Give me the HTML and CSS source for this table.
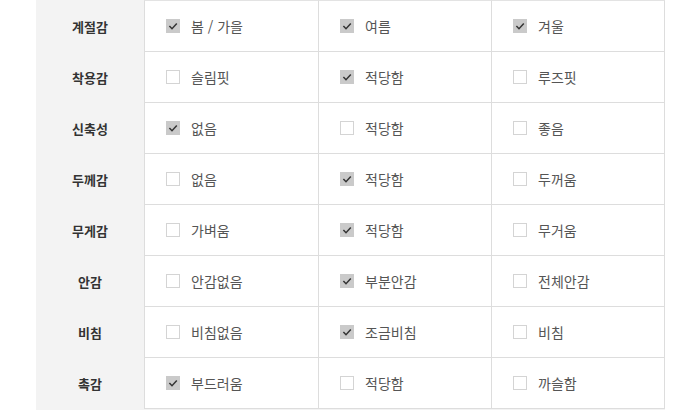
FILE: index.html
```html
<!DOCTYPE html>
<html lang="ko">
<head>
<meta charset="utf-8">
<link rel="stylesheet" href="styles.css">
</head>
<body>
<div class="sheet">
  <div class="row">
    <div class="label">계절감</div>
    <div class="opt"><span class="box on"><svg viewBox="0 0 14 14"><path d="M3.4 7 L6 9.7 L10.8 4.6"/></svg></span>봄 / 가을</div>
    <div class="opt"><span class="box on"><svg viewBox="0 0 14 14"><path d="M3.4 7 L6 9.7 L10.8 4.6"/></svg></span>여름</div>
    <div class="opt"><span class="box on"><svg viewBox="0 0 14 14"><path d="M3.4 7 L6 9.7 L10.8 4.6"/></svg></span>겨울</div>
  </div>
  <div class="row">
    <div class="label">착용감</div>
    <div class="opt"><span class="box"></span>슬림핏</div>
    <div class="opt"><span class="box on"><svg viewBox="0 0 14 14"><path d="M3.4 7 L6 9.7 L10.8 4.6"/></svg></span>적당함</div>
    <div class="opt"><span class="box"></span>루즈핏</div>
  </div>
  <div class="row">
    <div class="label">신축성</div>
    <div class="opt"><span class="box on"><svg viewBox="0 0 14 14"><path d="M3.4 7 L6 9.7 L10.8 4.6"/></svg></span>없음</div>
    <div class="opt"><span class="box"></span>적당함</div>
    <div class="opt"><span class="box"></span>좋음</div>
  </div>
  <div class="row">
    <div class="label">두께감</div>
    <div class="opt"><span class="box"></span>없음</div>
    <div class="opt"><span class="box on"><svg viewBox="0 0 14 14"><path d="M3.4 7 L6 9.7 L10.8 4.6"/></svg></span>적당함</div>
    <div class="opt"><span class="box"></span>두꺼움</div>
  </div>
  <div class="row">
    <div class="label">무게감</div>
    <div class="opt"><span class="box"></span>가벼움</div>
    <div class="opt"><span class="box on"><svg viewBox="0 0 14 14"><path d="M3.4 7 L6 9.7 L10.8 4.6"/></svg></span>적당함</div>
    <div class="opt"><span class="box"></span>무거움</div>
  </div>
  <div class="row">
    <div class="label">안감</div>
    <div class="opt"><span class="box"></span>안감없음</div>
    <div class="opt"><span class="box on"><svg viewBox="0 0 14 14"><path d="M3.4 7 L6 9.7 L10.8 4.6"/></svg></span>부분안감</div>
    <div class="opt"><span class="box"></span>전체안감</div>
  </div>
  <div class="row">
    <div class="label">비침</div>
    <div class="opt"><span class="box"></span>비침없음</div>
    <div class="opt"><span class="box on"><svg viewBox="0 0 14 14"><path d="M3.4 7 L6 9.7 L10.8 4.6"/></svg></span>조금비침</div>
    <div class="opt"><span class="box"></span>비침</div>
  </div>
  <div class="row">
    <div class="label">촉감</div>
    <div class="opt"><span class="box on"><svg viewBox="0 0 14 14"><path d="M3.4 7 L6 9.7 L10.8 4.6"/></svg></span>부드러움</div>
    <div class="opt"><span class="box"></span>적당함</div>
    <div class="opt"><span class="box"></span>까슬함</div>
  </div>
</div>
</body>
</html>
```
FILE: styles.css
```css
html, body {
  margin: 0;
  padding: 0;
  background: #ffffff;
}
body {
  font-family: "Noto Sans CJK KR", "Noto Sans", sans-serif;
  font-size: 14px;
  color: #555;
}
.sheet {
  margin-left: 36px;
  width: 629px;
  background: #f3f3f3;
  min-height: 410px;
}
.row {
  display: grid;
  grid-template-columns: 108px 174px 173px 174px;
  height: 51px;
}
.row:first-child {
  height: 52px;
}
.row:first-child .opt {
  border-top: 1px solid #e3e3e3;
}
.label {
  display: flex;
  align-items: center;
  justify-content: center;
  font-weight: bold;
  color: #333;
  font-size: 13px;
}
.opt {
  display: flex;
  align-items: center;
  background: #fff;
  border-left: 1px solid #ddd;
  border-bottom: 1px solid #ddd;
  padding-left: 21px;
  color: #555;
  font-size: 14px;
}
.opt:last-child {
  border-right: 1px solid #ddd;
}
.box {
  width: 14px;
  height: 14px;
  box-sizing: border-box;
  border: 1px solid #d4d4d4;
  background: #fff;
  margin-right: 11px;
  flex: none;
  display: flex;
}
.box.on {
  background: #cacaca;
  border-color: #cacaca;
}
.box svg {
  width: 14px;
  height: 14px;
  margin: -1px;
  fill: none;
  stroke: #333;
  stroke-width: 1.5;
}
```
